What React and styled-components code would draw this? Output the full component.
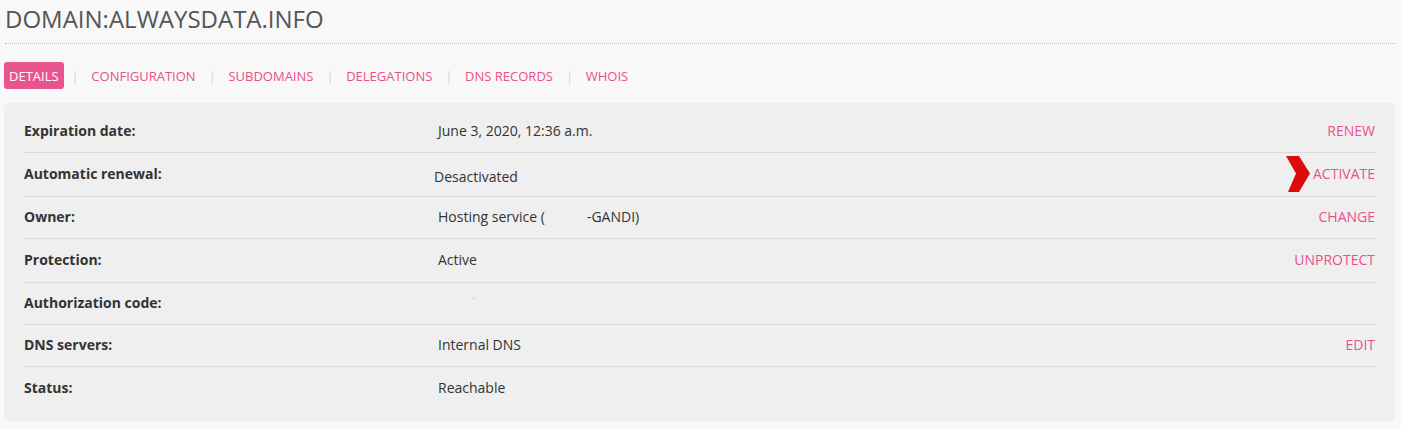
import React from "react";
import styled, { createGlobalStyle } from "styled-components";

const Global = createGlobalStyle`
  html, body { margin: 0; padding: 0; background: #f8f8f8; }
  body { font-family: "Open Sans", "Liberation Sans", sans-serif; color: #333; }
`;

const Page = styled.div`
  padding: 0 6px 0 4px;
`;

const Title = styled.h1`
  margin: 0 0 0 1px;
  padding: 4px 0 9px;
  font-size: 24px;
  line-height: 30px;
  font-weight: 400;
  color: #555;
  border-bottom: 1px dotted #bdbdbd;
`;

const Tabs = styled.nav`
  display: flex;
  align-items: center;
  margin-top: 18px;
  height: 27px;
`;

const Tab = styled.a`
  display: flex;
  align-items: center;
  height: 27px;
  padding: 0 5px;
  border-radius: 3px;
  font-size: 13px;
  text-transform: uppercase;
  text-decoration: none;
  color: ${(p) => (p.$active ? "#fff" : "#e9508d")};
  background: ${(p) => (p.$active ? "#e9548f" : "transparent")};
`;

const Sep = styled.span`
  margin: 0 7.6px 0 8px;
  color: #d4d4d4;
  font-size: 13px;
`;

const Panel = styled.section`
  margin-top: 14px;
  background: #efefef;
  border-radius: 6px;
  padding: 7px 20px 13px;
`;

const Row = styled.div`
  display: grid;
  grid-template-columns: 414px 1fr auto;
  align-items: center;
  box-sizing: border-box;
  height: ${(p) => p.$h}px;
  padding-bottom: 2px;
  border-bottom: ${(p) => (p.$last ? "none" : "1px dotted #c4c4c4")};
`;

const Label = styled.div`
  font-size: 14px;
  font-weight: 700;
  color: #333;
`;

const Value = styled.div`
  font-size: 14px;
  color: #333;
  margin-left: ${(p) => p.$dx || 0}px;
  padding-top: ${(p) => p.$dy || 0}px;
`;

const Blank = styled.span`
  display: inline-block;
  width: ${(p) => p.$w}px;
`;

const Speck = styled.span`
  display: inline-block;
  width: 2px;
  height: 1px;
  margin-left: 35px;
  background: #c8c8c8;
  vertical-align: middle;
  position: relative;
  top: -6px;
`;

const Action = styled.a`
  display: flex;
  align-items: center;
  justify-content: flex-end;
  font-size: 14px;
  text-transform: uppercase;
  text-decoration: none;
  color: #e9508d;
`;

const Chevron = () => (
  <svg width="25" height="36" viewBox="0 0 25 36" style={{ display: "block", marginRight: 2 }}>
    <polygon points="0,0 13,0 24,17.5 13,36 2,36 10,17.5" fill="#dc0c0c" />
  </svg>
);

const tabs = ["Details", "Configuration", "Subdomains", "Delegations", "DNS records", "Whois"];

export default function App() {
  return (
    <Page>
      <Global />
      <Title>DOMAIN:ALWAYSDATA.INFO</Title>
      <Tabs>
        {tabs.map((t, i) => (
          <React.Fragment key={t}>
            {i > 0 && <Sep>|</Sep>}
            <Tab href="#" $active={i === 0}>{t}</Tab>
          </React.Fragment>
        ))}
      </Tabs>
      <Panel>
        <Row $h={43}>
          <Label>Expiration date:</Label>
          <Value>June 3, 2020, 12:36 a.m.</Value>
          <Action href="#">Renew</Action>
        </Row>
        <Row $h={44}>
          <Label>Automatic renewal:</Label>
          <Value $dx={-4} $dy={5}>Desactivated</Value>
          <Action href="#"><Chevron />Activate</Action>
        </Row>
        <Row $h={42}>
          <Label>Owner:</Label>
          <Value>Hosting service (<Blank $w={42} />-GANDI)</Value>
          <Action href="#">Change</Action>
        </Row>
        <Row $h={44}>
          <Label>Protection:</Label>
          <Value>Active</Value>
          <Action href="#">Unprotect</Action>
        </Row>
        <Row $h={42}>
          <Label>Authorization code:</Label>
          <Value><Speck /></Value>
          <span />
        </Row>
        <Row $h={42}>
          <Label>DNS servers:</Label>
          <Value>Internal DNS</Value>
          <Action href="#">Edit</Action>
        </Row>
        <Row $h={42} $last>
          <Label>Status:</Label>
          <Value>Reachable</Value>
          <span />
        </Row>
      </Panel>
    </Page>
  );
}
